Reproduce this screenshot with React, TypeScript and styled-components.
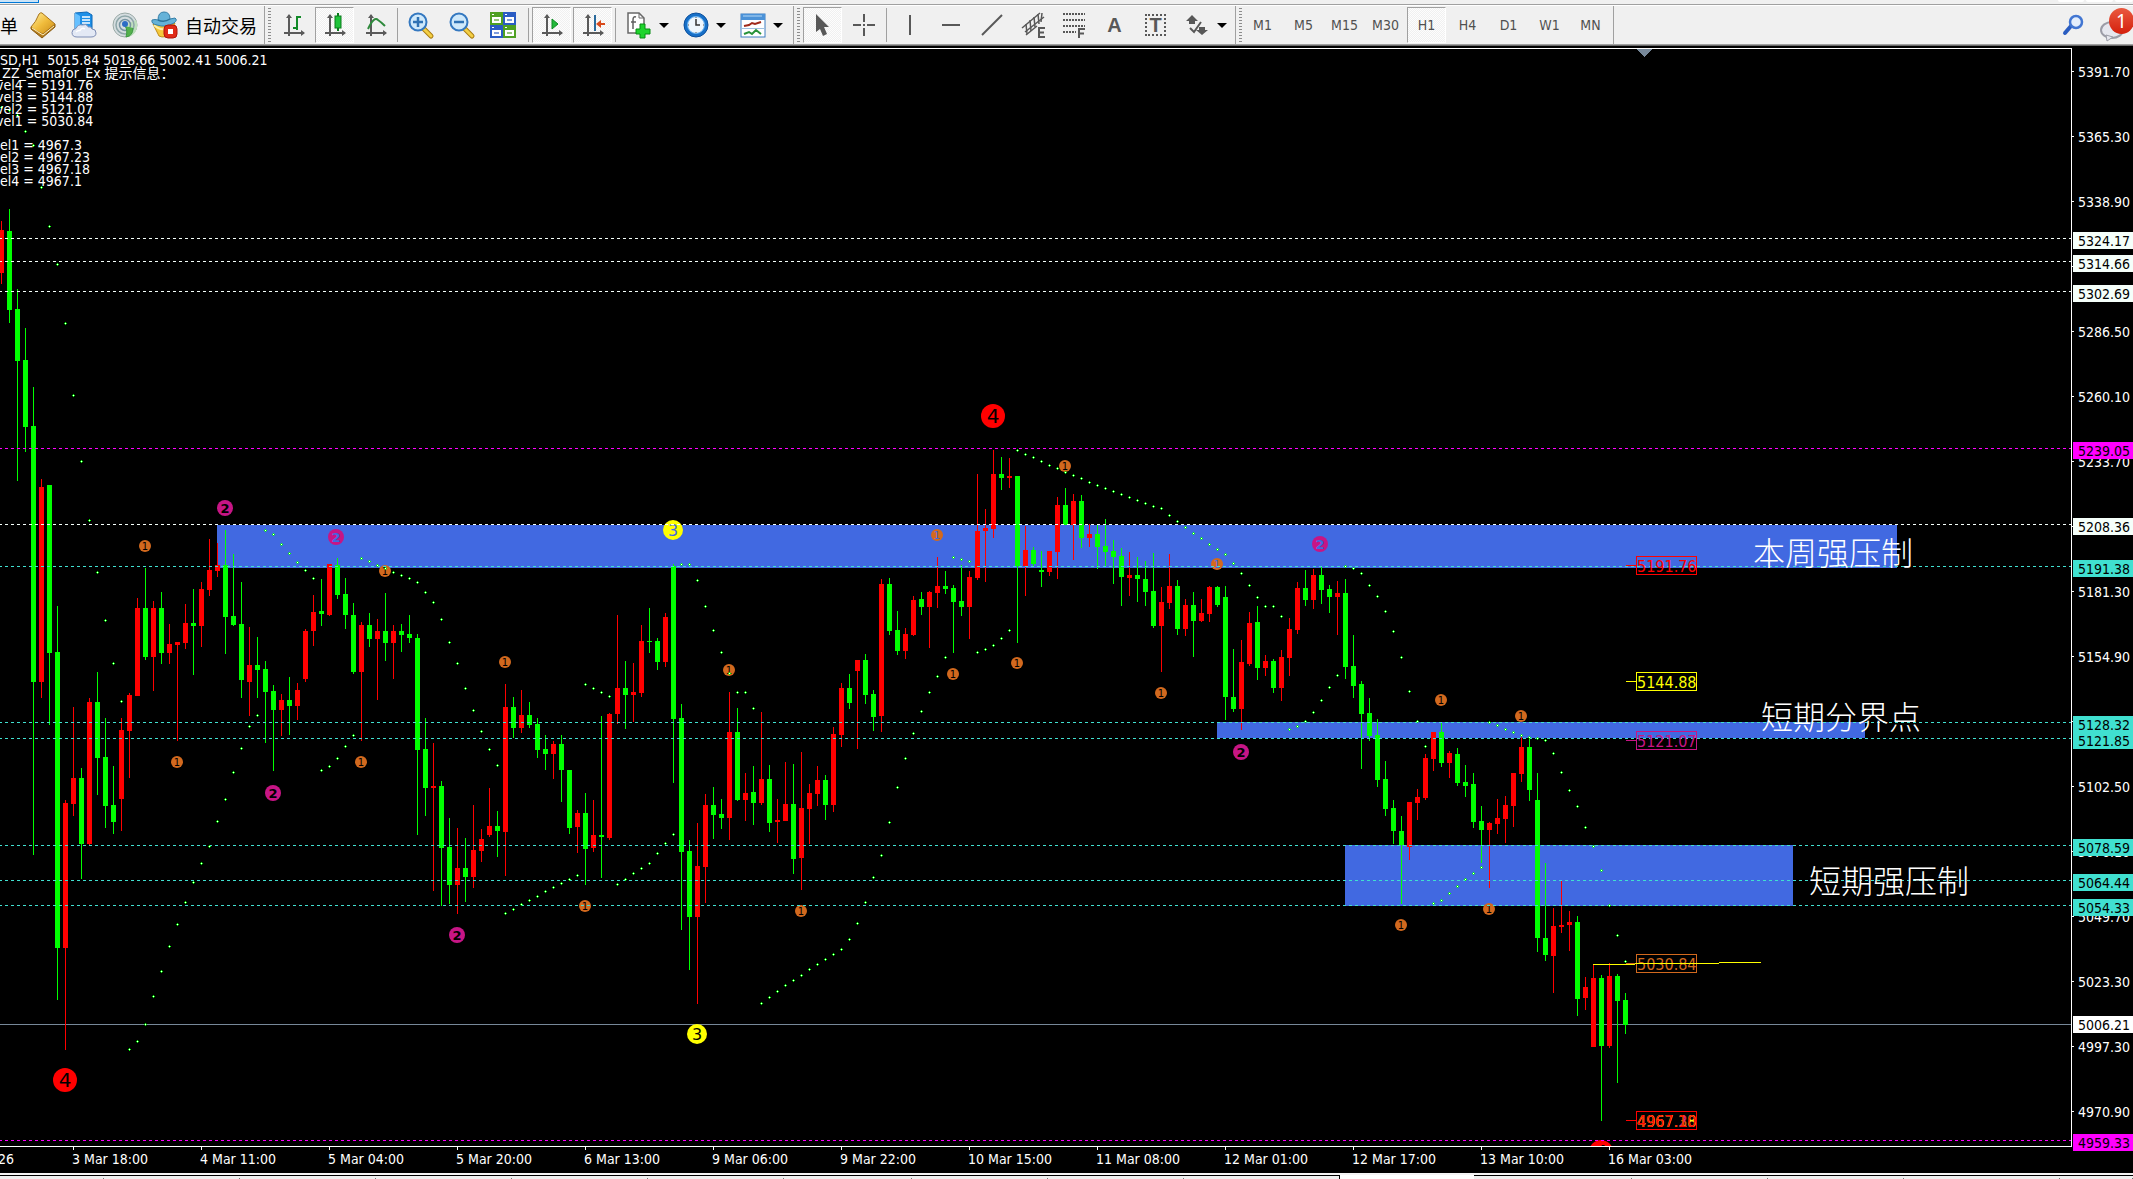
import React from 'react';
import styled, { createGlobalStyle, css } from 'styled-components';

const UI_FONT = '"DejaVu Sans Condensed", "Noto Sans", "Noto Sans CJK SC", sans-serif';
const CJK_FONT = '"Noto Sans CJK SC", sans-serif';

const UP = '#ff0000';
const DOWN = '#00ff00';
const BLUE = '#4169e1';
const TURQUOISE = '#40e0d0';
const MAGENTA = '#ff00ff';
const VIOLET = '#c71585';
const ORANGE = '#d2691e';
const YELLOW = '#ffff00';
const MINT = '#f5fffa';
const SLATE = '#778899';

const GlobalStyle = createGlobalStyle`
  *, *::before, *::after { box-sizing: border-box; }
  body { margin: 0; background: #000; overflow: hidden; }
`;

/* ------------------------------------------------------------------ */
/* Frame                                                               */
/* ------------------------------------------------------------------ */

const Window = styled.div`
  display: flex;
  flex-direction: column;
  height: 100vh;
  font-family: ${UI_FONT};
  font-size: 14px;
  line-height: 16px;
  background: #000;
`;

const UpperStrip = styled.div`
  display: flex;
  flex: none;
  height: 4px;
  background: #f0f0f0;
`;

const HotButton = styled.button`
  width: 39px;
  height: 3px;
  padding: 0;
  border: 0 solid #0078d7;
  border-width: 0 1px 1px 0;
  background: #cce4f7;
`;

const StripTail = styled.div`
  display: flex;
  gap: 2px;
  margin-left: auto;
`;

const StripBox = styled.button<{ $width: number }>`
  width: ${(p) => p.$width}px;
  height: 2px;
  padding: 0;
  border: 0;
  border-radius: 0 0 2px 2px;
  background: #fff;
`;

const Toolbar = styled.div`
  display: flex;
  flex: none;
  align-items: center;
  height: 42px;
  border-top: 1px solid #a0a0a0;
  border-bottom: 1px solid #696969;
  background: #f0f0f0;
  box-shadow: inset 0 1px 0 #fff, inset 0 -1px 0 #a0a0a0;
`;

const Group = styled.div<{ $tail?: number }>`
  display: flex;
  align-items: center;
  height: 38px;
  padding-right: ${(p) => p.$tail ?? 0}px;
  border-right: 1px solid #a0a0a0;
`;

const Gripper = styled.i<{ $after?: number }>`
  width: 3px;
  height: 34px;
  margin: 0 ${(p) => p.$after ?? 2}px 0 3px;
  background: repeating-linear-gradient(#8c8c8c 0 1px, #f0f0f0 1px 3px);
`;

const Separator = styled.i<{ $before?: number }>`
  width: 1px;
  height: 34px;
  margin: 0 2px 0 ${(p) => p.$before ?? 2}px;
  background: #a0a0a0;
`;

const ToolButton = styled.button<{ $pressed?: boolean }>`
  display: flex;
  align-items: center;
  justify-content: center;
  width: 39px;
  height: 36px;
  margin: 0 1px;
  padding: 0;
  border: 1px solid transparent;
  background: transparent;
  color: #505050;
  font: 14px/16px ${UI_FONT};
  ${(p) =>
    p.$pressed &&
    css`
      border-color: #a0a0a0 #fff #fff #a0a0a0;
      background: repeating-conic-gradient(#f0f0f0 0 25%, #fdfdfd 0 50%) 0 0 / 2px 2px;
    `}
`;

const TextButton = styled.button<{ $width?: number; $inset?: number }>`
  display: flex;
  align-items: center;
  gap: 6px;
  height: 36px;
  padding: 0 0 0 ${(p) => p.$inset ?? 0}px;
  width: ${(p) => (p.$width ? `${p.$width}px` : 'auto')};
  border: 0;
  background: transparent;
  color: #000;
  font: 18px/24px ${CJK_FONT};
  white-space: nowrap;
`;

const CaretButton = styled.button`
  display: flex;
  align-items: center;
  width: 16px;
  height: 36px;
  padding: 0;
  border: 0;
  background: transparent;
  &::before {
    content: '';
    border: 5px solid transparent;
    border-top-color: #000;
    border-bottom: 0;
  }
`;

const ToolbarEnd = styled.div`
  display: flex;
  align-items: center;
  gap: 16px;
  margin-left: auto;
`;

const ChatButton = styled.button`
  position: relative;
  width: 34px;
  height: 36px;
  padding: 0;
  border: 0;
  background: transparent;
`;

const Badge = styled.span`
  position: absolute;
  top: 1px;
  right: -1px;
  width: 25px;
  height: 26px;
  border-radius: 50%;
  background: linear-gradient(#ea5a40, #d4200c);
  color: #fff;
  font: 19px/26px "Noto Sans", sans-serif;
  text-align: center;
`;

const Glyph = styled.svg`
  display: block;
  flex: none;
  overflow: visible;
`;

/* ------------------------------------------------------------------ */
/* Toolbar icons                                                       */
/* ------------------------------------------------------------------ */

const Icon = ({ size = 26, children }: { size?: number; children: React.ReactNode }) => (
  <Glyph width={size} height={size} viewBox={`0 0 ${size} ${size}`} aria-hidden="true">
    {children}
  </Glyph>
);

const Axes = ({ children }: { children?: React.ReactNode }) => (
  <Icon size={24}>
    <path d="M7 2V23M2 20H22" stroke="#5a5a5a" strokeWidth="2" fill="none" />
    <path d="M4 5L7 1L10 5zM19 17L23 20L19 23z" fill="#5a5a5a" />
    {children}
  </Icon>
);

const GoldIcon = () => (
  <Icon>
    <defs>
      <linearGradient id="gold" x1="0" y1="0" x2="1" y2="1">
        <stop offset="0" stopColor="#fff0a0" />
        <stop offset="0.5" stopColor="#f0bc3c" />
        <stop offset="1" stopColor="#c98a18" />
      </linearGradient>
    </defs>
    <path d="M1 15V17L12 26L25 15V12L12 21L2 14z" fill="#b27a1c" stroke="#8a5c10" />
    <path d="M9 2Q11 0 12 1L25 12L13 22Q5 19 1 15Q6 10 9 2z" fill="url(#gold)" stroke="#a8741a" />
    <path d="M2 16Q8 20 13 23L24 14" fill="none" stroke="#fff2c0" />
  </Icon>
);

const CloudIcon = () => (
  <Icon>
    <path d="M4 1L16 0L21 3V17H4z" fill="#1e90e8" stroke="#0d68b8" />
    <path d="M4 1L9 4V17H4z" fill="#66c0ff" />
    <path d="M11 5H19M11 8H19M11 11H19" stroke="#fff" strokeWidth="1.500" />
    <path d="M6 25Q1 25 1 20.500Q1 17 5 16.500Q7 12 11.500 13Q15 11 17.500 15Q20 14 21 17Q25 17 25 21Q25 25 20 25z" fill="#e3e9f5" stroke="#7d8db4" />
    <path d="M5 20Q7 18 9 18.500Q11 15 14 17" fill="none" stroke="#fff" strokeWidth="1.500" />
  </Icon>
);

const SignalIcon = () => (
  <Icon>
    <circle cx="13" cy="13" r="12" fill="#d5dde0" stroke="#9aa9a6" />
    <path d="M13 13L16 25A12 12 0 0 0 24 8z" fill="#bfe0be" />
    <circle cx="13" cy="13" r="9" fill="none" stroke="#8fa7a9" strokeWidth="1.500" />
    <circle cx="13" cy="13" r="5.500" fill="none" stroke="#7794a0" strokeWidth="1.500" />
    <path d="M13 14Q16 18 14 25Q21 24 21 16" fill="#54b04c" stroke="#3c9840" />
    <circle cx="13" cy="12" r="3" fill="#2c6cc4" />
  </Icon>
);

const AutoTradeIcon = () => (
  <Icon size={28}>
    <path d="M2 13L8 25Q14 28 19 22L24 12z" fill="#f5c93c" stroke="#c08c18" />
    <path d="M3 14Q8 19 14 18" fill="none" stroke="#fff0a8" strokeWidth="2" />
    <path d="M1 9Q0 13 6 14Q14 17 23 12Q27 9 24 7L19 8Q19 1 13 1Q7 1 7 9Q4 8 1 9z" fill="#65b2d8" stroke="#357fa8" />
    <path d="M7 9Q13 12 19 8" fill="none" stroke="#2d7298" strokeWidth="1.500" />
    <rect x="13" y="14" width="13" height="13" rx="4" fill="#e02b18" stroke="#b01408" />
    <rect x="17" y="18" width="5" height="5" fill="#fff" />
  </Icon>
);

const Magnifier = ({ plus }: { plus?: boolean }) => (
  <Icon>
    <path d="M16 17L23 24" stroke="#a87a10" strokeWidth="5" strokeLinecap="round" />
    <path d="M16 17L23 24" stroke="#f3cf45" strokeWidth="3" strokeLinecap="round" />
    <circle cx="10" cy="10" r="8.500" fill="#cfe9fb" stroke="#3478c0" strokeWidth="2" />
    <path d={plus ? 'M5 10H15M10 5V15' : 'M5 10H15'} stroke="#2f72b4" strokeWidth="2.500" />
  </Icon>
);

const TilesIcon = () => (
  <Icon>
    {[
      { x: 0, y: 0, c: '#4ea022' },
      { x: 13, y: 0, c: '#2a5cc4' },
      { x: 0, y: 13, c: '#2a5cc4' },
      { x: 13, y: 13, c: '#4ea022' },
    ].map(({ x, y, c }) => (
      <g key={`${x}-${y}`}>
        <rect x={x} y={y} width="13" height="13" fill={c} />
        <rect x={x + 2} y={y + 5} width="9" height="6" fill="#fff" />
        <rect x={x + 4} y={y + 7} width="5" height="2" fill={c} opacity="0.6" />
        <rect x={x + 2} y={y + 2} width="2" height="1" fill="#fff" />
      </g>
    ))}
  </Icon>
);

const AddIndicatorIcon = () => (
  <Icon size={28}>
    <path d="M3 2H14L19 7V22H3z" fill="#fff" stroke="#686868" strokeWidth="1.500" />
    <path d="M14 2V7H19" fill="none" stroke="#686868" />
    <path d="M11 6Q8 5 8 9V18M6 11H11" fill="none" stroke="#606060" strokeWidth="1.500" />
    <path d="M15 13H20V18H25V23H20V27H15V23H11V18H15z" fill="#1ed42c" stroke="#078c12" />
  </Icon>
);

const ClockIcon = () => (
  <Icon>
    <circle cx="13" cy="13" r="12" fill="#1770c8" stroke="#0c4f9c" />
    <circle cx="13" cy="13" r="8.500" fill="#eef6fd" stroke="#65b0f0" />
    <path d="M13 7V13H17" fill="none" stroke="#333" strokeWidth="1.500" />
    <path d="M13 5V6M13 20V21M5 13H6M20 13H21" stroke="#555" />
  </Icon>
);

const TemplateIcon = () => (
  <Icon>
    <rect x="1" y="2" width="24" height="23" fill="#fff" stroke="#3d7cc0" />
    <rect x="1" y="2" width="24" height="6" fill="#4b92d8" />
    <path d="M3 4H22" stroke="#b4d8f6" />
    <path d="M4 14L9 13L12 11L15 12L21 10" fill="none" stroke="#a02a1a" strokeWidth="2" />
    <path d="M2 16.500H24" stroke="#9fc0e0" />
    <path d="M4 22L9 20L12 22L16 18L21 22" fill="none" stroke="#28923a" strokeWidth="2" />
  </Icon>
);

const GREY = '#585858';

const CursorIcon = () => (
  <Icon size={24}>
    <path d="M5 1V19L9 16L12 23L16 21L13 14H18z" fill={GREY} />
  </Icon>
);

const CrossIcon = () => (
  <Icon size={24}>
    <path d="M12 1V9M12 15V23M1 12H9M15 12H23" stroke={GREY} strokeWidth="2" />
    <path d="M11 12H13" stroke={GREY} strokeWidth="2" />
  </Icon>
);

const VLineIcon = () => (
  <Icon size={24}>
    <path d="M12 2V22" stroke={GREY} strokeWidth="2" />
  </Icon>
);

const HLineIcon = () => (
  <Icon size={24}>
    <path d="M3 12H21" stroke={GREY} strokeWidth="2" />
  </Icon>
);

const TrendIcon = () => (
  <Icon size={24}>
    <path d="M2 22L22 2" stroke={GREY} strokeWidth="2" />
  </Icon>
);

const ChannelIcon = () => (
  <Icon size={26}>
    <path d="M2 16L20 1M5 20L24 5M6 23L17 14" stroke={GREY} strokeWidth="1.500" />
    <path d="M6 12L7 22M10 8L11 19M14 5L15 15M18 2L19 12M22 1L21 10" stroke={GREY} strokeWidth="1.500" />
    <path d="M25 16H19V25H25M19 20.500H24" fill="none" stroke={GREY} strokeWidth="2" />
  </Icon>
);

const FiboIcon = () => (
  <Icon size={26}>
    <path d="M2 2H24M2 8H24M2 14H24M2 20H15" stroke={GREY} strokeWidth="2" strokeDasharray="2 1" />
    <path d="M24 17H18V26M18 21.500H23" fill="none" stroke={GREY} strokeWidth="2" />
  </Icon>
);

const Letter = styled.span<{ $boxed?: boolean }>`
  color: ${GREY};
  font: bold 20px/20px "Liberation Sans", sans-serif;
  ${(p) =>
    p.$boxed &&
    css`
      width: 21px;
      height: 22px;
      border: 2px dotted ${GREY};
      line-height: 18px;
    `}
`;

const ArrowsIcon = () => (
  <Icon size={24}>
    <path d="M7 2L13 8H10V11H4V8H1z" fill={GREY} />
    <path d="M17 22L11 17H14V14H20V17H23z" fill={GREY} />
    <path d="M5 15L9 19L16 9" fill="none" stroke={GREY} strokeWidth="2" />
  </Icon>
);

const SearchIcon = () => (
  <Icon size={22}>
    <path d="M10 12L4 19" stroke="#2a5cc0" strokeWidth="4" strokeLinecap="round" />
    <circle cx="15" cy="8" r="6" fill="#e4eefc" stroke="#4276d2" strokeWidth="2.500" />
  </Icon>
);

const ChatIcon = () => (
  <Icon size={36}>
    <ellipse cx="13" cy="23" rx="11" ry="8" fill="#e6e7ee" stroke="#9b9ca6" strokeWidth="2" />
    <path d="M7 28L8 34L14 30z" fill="#e6e7ee" stroke="#9b9ca6" />
  </Icon>
);

/* ------------------------------------------------------------------ */
/* Chart data                                                          */
/* ------------------------------------------------------------------ */

// One candle per entry: colour, high, body top, body bottom, low.
const CANDLES = `
r 221 230 273 284|g 209 231 310 323|g 289 309 361 481|g 328 360 427 452|g 387 426 682 855|r 479 487 682 698
g 485 485 653 725|g 606 652 948 1000|r 800 803 948 1050|r 707 778 804 816|g 768 778 844 879|r 698 702 844 845
g 672 702 758 795|g 718 757 806 828|g 766 805 822 834|r 718 730 799 831|r 693 695 731 778|r 598 608 696 696
g 568 608 657 660|r 601 608 657 691|g 592 608 653 664|r 624 644 653 664|r 642 642 645 741|r 604 623 643 649
g 589 623 626 675|r 582 589 626 647|r 539 570 590 596|r 543 565 571 577|g 530 565 617 654|g 554 616 625 626
g 582 624 680 698|r 627 665 682 716|g 637 665 670 698|g 661 669 692 743|g 685 691 710 771|r 694 700 710 736
g 677 700 706 735|r 683 690 706 720|r 629 631 679 682|r 595 612 631 646|g 579 611 614 626|r 564 564 615 616
g 558 565 595 599|g 578 594 615 629|g 603 615 672 674|r 622 625 672 741|g 613 625 639 647|r 619 631 639 700
g 593 631 643 661|r 625 631 643 679|g 624 631 635 652|g 615 634 638 643|g 634 638 750 835|g 718 749 788 816
r 743 786 788 891|g 781 786 848 906|g 818 847 885 904|r 828 868 885 914|g 838 868 877 902|r 805 850 877 888
r 829 839 851 862|r 788 826 835 837|g 811 826 831 857|r 684 707 832 876|g 697 707 728 738|r 690 715 728 733
g 702 715 725 728|g 718 724 750 758|g 735 749 754 770|r 741 744 754 779|g 735 744 770 802|g 770 770 828 834
r 810 813 827 853|g 793 813 849 885|r 800 835 848 852|g 716 835 837 878|r 713 714 838 840|r 615 688 714 724
g 661 688 695 729|r 663 692 695 722|r 625 641 693 697|g 608 641 642 653|g 638 641 662 670|r 613 617 662 667
g 564 566 719 783|g 704 718 852 930|g 840 851 917 970|r 823 866 917 1004|r 794 805 867 903|g 787 805 815 839
g 799 814 818 829|r 692 732 818 840|g 708 732 800 801|r 773 793 800 821|g 766 792 803 825|r 712 779 803 805
g 765 779 823 832|r 799 820 822 843|r 762 804 821 821|g 764 804 859 874|r 752 808 858 890|r 784 793 809 844
r 766 780 794 806|g 775 780 805 820|r 727 734 805 812|r 683 688 735 747|g 674 688 703 709|r 660 660 671 749
g 654 660 695 704|g 690 694 717 731|r 579 584 716 732|g 578 584 631 635|g 611 630 651 655|r 628 634 651 659
r 596 600 635 636|g 592 599 607 615|r 591 592 607 648|r 557 586 593 608|g 571 586 589 594|g 585 588 602 653
g 565 601 607 616|r 571 577 607 639|r 474 531 578 580|r 509 528 531 582|r 450 474 529 538|g 457 474 478 490
r 458 476 478 488|g 476 476 566 643|r 526 550 566 596|g 547 550 564 566|g 551 570 572 587|r 551 551 572 576
r 497 505 552 579|g 488 505 525 525|r 494 501 525 560|g 495 501 538 548|r 524 534 538 547|g 525 534 547 569
g 519 546 552 567|g 540 551 557 584|g 548 556 577 606|r 552 575 578 596|g 557 575 579 602|g 561 579 592 606
g 553 591 626 628|r 587 602 626 672|r 554 586 603 609|g 580 586 629 635|r 599 605 629 636|g 592 605 621 657
r 599 613 621 622|r 586 587 614 622|g 586 587 605 607|g 586 597 697 720|g 649 697 709 712|r 640 662 709 730
r 612 623 664 666|g 606 622 668 680|r 655 661 668 676|g 659 661 688 693|r 650 657 688 701|r 618 629 658 676
r 582 588 630 634|g 570 588 600 606|r 569 575 600 609|g 567 575 590 604|g 585 589 597 613|r 581 593 597 635
g 579 593 667 679|g 635 666 686 698|g 681 684 714 769|g 698 713 736 741|g 719 735 780 787|g 761 779 809 816
g 800 808 831 844|g 816 831 845 904|r 802 802 847 860|r 789 797 803 820|r 754 758 798 800|r 732 732 759 771
g 723 732 763 767|r 751 753 763 778|g 748 754 783 786|g 765 782 786 797|g 773 784 822 828|g 806 821 830 863
r 822 823 830 888|r 799 818 824 834|r 796 805 819 843|r 773 773 806 827|r 737 747 774 782|g 737 747 790 801
g 773 800 938 952|g 863 938 955 961|r 908 926 956 993|r 881 925 927 933|r 911 922 925 951|g 916 922 999 1016
r 977 987 998 1010|r 964 978 1047 1047|g 975 978 1046 1121|r 963 976 1046 1048|g 974 976 1001 1083|g 993 1000 1025 1034
`
  .trim()
  .split(/[|\n]/)
  .map((entry) => {
    const [tone, ...levels] = entry.split(' ');
    const [high, top, bottom, low] = levels.map(Number);
    return { tone, high, top, bottom, low };
  });

// Parabolic SAR level for every candle.
const SAR = [
  107, 110, 115, 131, 145, 187, 226, 264, 323, 395, 461, 520, 572, 620, 663, 701, 1049, 1041, 1024, 996,
  971, 946, 924, 902, 882, 863, 846, 821, 799, 772, 748, 726, 715, 530, 534, 544, 553, 562, 570, 578,
  770, 766, 758, 746, 735, 558, 561, 565, 568, 572, 575, 578, 582, 592, 602, 619, 642, 663, 688, 710,
  731, 749, 765, 913, 909, 904, 900, 896, 891, 887, 883, 879, 875, 684, 688, 692, 696, 884, 879, 873,
  868, 863, 853, 843, 834, 564, 564, 580, 606, 630, 652, 673, 692, 692, 708, 1003, 997, 991, 985, 980,
  975, 969, 964, 959, 954, 949, 939, 923, 902, 877, 855, 822, 787, 758, 733, 711, 692, 676, 657, 557,
  559, 561, 652, 649, 645, 638, 630, 450, 454, 457, 461, 465, 468, 472, 475, 478, 482, 485, 488, 491,
  494, 497, 500, 503, 506, 508, 515, 521, 527, 533, 538, 544, 549, 554, 563, 573, 585, 597, 606, 606,
  616, 729, 726, 721, 712, 700, 687, 675, 566, 568, 573, 585, 596, 611, 631, 657, 691, 721, 746, 903,
  900, 893, 886, 879, 873, 867, 722, 725, 729, 732, 735, 737, 738, 740, 753, 772, 790, 806, 827, 846,
  870, 905, 935, 961,
];

const LEVELS = [
  { y: 238, color: MINT, price: '5324.17' },
  { y: 261, color: MINT, price: '5314.66' },
  { y: 291, color: MINT, price: '5302.69' },
  { y: 448, color: MAGENTA, price: '5239.05' },
  { y: 524, color: MINT, price: '5208.36' },
  { y: 566, color: TURQUOISE, price: '5191.38' },
  { y: 722, color: TURQUOISE, price: '5128.32' },
  { y: 738, color: TURQUOISE, price: '5121.85' },
  { y: 845, color: TURQUOISE, price: '5078.59' },
  { y: 880, color: TURQUOISE, price: '5064.44' },
  { y: 905, color: TURQUOISE, price: '5054.33' },
  { y: 1140, color: MAGENTA, price: '4959.33' },
];

const ZONES = [
  { x: 217, y: 525, w: 1680, h: 43 },
  { x: 1217, y: 722, w: 648, h: 16 },
  { x: 1345, y: 845, w: 448, h: 61 },
];

const NOTES = [
  { x: 1753, y: 565, text: '本周强压制' },
  { x: 1761, y: 729, text: '短期分界点' },
  { x: 1809, y: 893, text: '短期强压制' },
];

const PRICE_TAGS = [
  { y: 556, color: UP, texts: [['5191.76', UP]] },
  { y: 672, color: YELLOW, texts: [['5144.88', YELLOW]] },
  { y: 731, color: VIOLET, texts: [['5121.07', VIOLET]] },
  { y: 954, color: ORANGE, texts: [['5030.84', ORANGE]] },
  {
    y: 1111,
    color: UP,
    texts: [
      ['4967.30', ORANGE],
      ['4967.23', VIOLET],
      ['4967.18', YELLOW],
      ['4967.10', UP],
    ],
  },
];

const RANKS = {
  1: { r: 6, fill: ORANGE, size: 10, dy: 4, weight: 'normal' },
  2: { r: 8, fill: VIOLET, size: 13, dy: 5, weight: 'bold' },
  3: { r: 10, fill: YELLOW, size: 16, dy: 6, weight: 'normal' },
  4: { r: 12, fill: UP, size: 20, dy: 7, weight: 'normal' },
} as const;

// Swing points: rank, x, y.
const SWINGS: [keyof typeof RANKS, number, number][] = [
  [1, 145, 546], [1, 177, 762], [1, 361, 762], [1, 385, 571], [1, 505, 662], [1, 585, 906],
  [1, 729, 670], [1, 801, 911], [1, 937, 535], [1, 953, 674], [1, 1017, 663], [1, 1065, 466],
  [1, 1161, 693], [1, 1217, 564], [1, 1401, 925], [1, 1441, 700], [1, 1489, 909], [1, 1521, 716],
  [2, 225, 508], [2, 336, 537], [2, 273, 793], [2, 457, 935], [2, 1241, 752], [2, 1320, 544],
  [3, 673, 530], [3, 697, 1034],
  [4, 65, 1080], [4, 993, 416], [4, 1601, 1152],
];

const GRID_PRICES = [
  '5391.70', '5365.30', '5338.90', '5312.50', '5286.50', '5260.10', '5233.70', '5207.30', '5181.30',
  '5154.90', '5128.50', '5102.50', '5076.10', '5049.70', '5023.30', '4997.30', '4970.90',
];

const TIMES = [
  '3 Mar 18:00', '4 Mar 11:00', '5 Mar 04:00', '5 Mar 20:00', '6 Mar 13:00', '9 Mar 06:00', '9 Mar 22:00',
  '10 Mar 15:00', '11 Mar 08:00', '12 Mar 01:00', '12 Mar 17:00', '13 Mar 10:00', '16 Mar 03:00',
];

const LAST_PRICE_Y = 1024;
const PLOT_TOP = 49;
const STEP = 8;
const candleX = (i: number) => 1 + i * STEP;

const inZone = (x: number, y: number) =>
  ZONES.some((z) => x >= z.x && x <= z.x + z.w && y >= z.y && y <= z.y + z.h);

/* ------------------------------------------------------------------ */
/* Chart                                                               */
/* ------------------------------------------------------------------ */

const ChartArea = styled.main`
  display: grid;
  flex: 1;
  grid-template-columns: minmax(0, 1fr) 61px;
  grid-template-rows: minmax(0, 1fr) 26px;
  min-height: 0;
  padding-top: 2px;
  background: #000;
  color: #fff;
`;

const Plot = styled.section`
  position: relative;
  display: grid;
  overflow: hidden;
  border: 0 solid #fff;
  border-width: 1px 1px 1px 0;
`;

const Canvas = styled.svg`
  display: block;
  width: 100%;
  height: 100%;
  min-height: 0;
`;

const NoteText = styled.text`
  fill: #fff;
  font-family: ${CJK_FONT};
  font-size: 32px;
  font-weight: 300;
`;

const TagText = styled.text`
  font-family: ${UI_FONT};
  font-size: 16px;
`;

const Comment = styled.div`
  position: absolute;
  top: 4px;
  left: 0;
  line-height: 12px;
  white-space: pre;
`;

const Quote = styled.div`
  line-height: 14px;
`;

const Shifted = styled.div`
  margin-left: -4px;
`;

const LowerLevels = styled.div`
  padding-top: 12px;
`;

const PriceAxis = styled.aside`
  position: relative;
  grid-row: 1 / -1;
  grid-column: 2;
`;

const PriceList = styled.ol`
  margin: -9px 0 0;
  padding: 0;
  list-style: none;
`;

const PriceItem = styled.li`
  display: flex;
  align-items: center;
  gap: 4px;
  height: 65px;
  &::before {
    content: '';
    width: 2px;
    height: 1px;
    background: #fff;
  }
`;

const PriceFlag = styled.div<{ $top: number; $color: string }>`
  position: absolute;
  top: ${(p) => p.$top}px;
  left: 1px;
  right: 0;
  height: 17px;
  padding-left: 5px;
  background: ${(p) => p.$color};
  color: #000;
  line-height: 18px;
`;

const TimeAxis = styled.ol`
  display: flex;
  margin: 0;
  padding: 0;
  overflow: hidden;
  list-style: none;
  white-space: nowrap;
`;

const TimeItem = styled.li`
  flex: none;
  width: 128px;
  line-height: 18px;
  &::before {
    content: '';
    display: block;
    width: 1px;
    height: 3px;
    margin-left: 1px;
    background: #fff;
  }
`;

const FirstTime = styled.li`
  flex: none;
  width: 72px;
  padding-top: 3px;
  line-height: 18px;
  text-indent: -2px;
`;

const TabStrip = styled.nav`
  display: flex;
  flex: none;
  height: 6px;
  border-top: 2px solid #f4f4f4;
  background: #f0f0f0;
`;

const Tab = styled.button<{ $active?: boolean; $grow?: boolean; $width?: number }>`
  flex: ${(p) => (p.$grow ? '1' : 'none')};
  width: ${(p) => p.$width ?? 136}px;
  height: 4px;
  padding: 0;
  border: 0;
  border-top: 1px solid ${(p) => (p.$active ? '#fff' : '#000')};
  background: ${(p) =>
    p.$active ? '#fff' : 'linear-gradient(#777, #777) 100% 100% / 1px 1px no-repeat #f0f0f0'};
  box-shadow: ${(p) => (p.$active ? '-1px 0 0 #000, 1px 0 0 #000' : 'none')};
`;

const PriceChart = () => {
  const greenDots = SAR.map((y, i) => {
    const x = candleX(i);
    return `M${x - 1} ${y}h3v1h-3zM${x} ${y - 1}h1v3h-1z`;
  }).join('');
  const dotCores = SAR.map((y, i) => `M${candleX(i)} ${y}h1v1h-1z`).join('');

  return (
    <Canvas role="img" aria-label="H1 candlestick chart">
      <g transform={`translate(0 ${-PLOT_TOP})`}>
        <g shapeRendering="crispEdges">
          {ZONES.map((z) => (
            <rect key={z.y} x={z.x} y={z.y} width={z.w} height={z.h} fill={BLUE} />
          ))}
          <rect x="0" y={LAST_PRICE_Y} width="100%" height="1" fill={SLATE} />
          {CANDLES.map((c, i) => {
            const x = candleX(i);
            const fill = c.tone === 'r' ? UP : DOWN;
            return (
              <g key={i} fill={fill}>
                <rect x={x} y={c.high} width="1" height={c.low - c.high} />
                <rect x={x - 2} y={c.top} width="5" height={Math.max(1, c.bottom - c.top)} />
              </g>
            );
          })}
        </g>

        {SWINGS.map(([rank, x, y]) => {
          const s = RANKS[rank];
          return (
            <g key={`${x}-${y}`}>
              <circle cx={x} cy={y} r={s.r} fill={s.fill} />
              <text
                x={x}
                y={y + s.dy}
                fill={inZone(x, y) ? BLUE : '#000'}
                fontFamily='"DejaVu Sans", sans-serif'
                fontSize={s.size}
                fontWeight={s.weight}
                textAnchor="middle"
              >
                {rank}
              </text>
            </g>
          );
        })}

        <g shapeRendering="crispEdges">
          {LEVELS.map((l) => (
            <line
              key={l.y}
              x1="0"
              x2="100%"
              y1={l.y + 0.5}
              y2={l.y + 0.5}
              stroke={l.color}
              strokeDasharray="3 3"
              strokeDashoffset="1"
            />
          ))}
          <path d={greenDots} fill="#00ff00" />
          <path d={dotCores} fill="#fff" />
          <path d="M1636 49H1652L1644 57z" fill={SLATE} />
          {PRICE_TAGS.map((t) => (
            <g key={t.y}>
              <rect x="1626" y={t.y + 9} width="10" height="1" fill={t.color} />
              <rect x="1636.5" y={t.y + 0.5} width="60" height="18" fill="none" stroke={t.color} />
            </g>
          ))}
        </g>

        {PRICE_TAGS.map((t) =>
          t.texts.map(([text, color]) => (
            <TagText key={text} x="1637" y={t.y + 16} fill={color}>
              {text}
            </TagText>
          )),
        )}
        <path
          d="M1593 964h42v1h-42zM1635 963h84v1h-84zM1719 962h42v1h-42z"
          fill={YELLOW}
          shapeRendering="crispEdges"
        />
        {NOTES.map((n) => (
          <NoteText key={n.y} x={n.x} y={n.y}>
            {n.text}
          </NoteText>
        ))}
      </g>
    </Canvas>
  );
};

/* ------------------------------------------------------------------ */
/* App                                                                 */
/* ------------------------------------------------------------------ */

type Tool = { label: string; icon: React.ReactNode; pressed?: boolean };

const Tools = ({ items }: { items: Tool[] }) => (
  <>
    {items.map((t) => (
      <ToolButton key={t.label} type="button" aria-label={t.label} aria-pressed={!!t.pressed} $pressed={t.pressed}>
        {t.icon}
      </ToolButton>
    ))}
  </>
);

const PERIODS = ['M1', 'M5', 'M15', 'M30', 'H1', 'H4', 'D1', 'W1', 'MN'];
const LEFT_TABS = [104, 136, 136, 136, 136, 136, 128, 136, 136];
const RIGHT_TABS = [158, 136, 136, 156];

export default function App() {
  return (
    <Window>
      <GlobalStyle />
      <UpperStrip>
        <HotButton type="button" aria-label="Menu" />
        <StripTail>
          <StripBox type="button" aria-label="Minimize" $width={26} />
          <StripBox type="button" aria-label="Restore" $width={27} />
          <StripBox type="button" aria-label="Close" $width={18} />
        </StripTail>
      </UpperStrip>

      <Toolbar role="toolbar">
        <Group $tail={6}>
          <TextButton type="button" $width={22}>单</TextButton>
          <Tools
            items={[
              { label: 'Market', icon: <GoldIcon /> },
              { label: 'Hosting', icon: <CloudIcon /> },
              { label: 'Signals', icon: <SignalIcon /> },
            ]}
          />
          <TextButton type="button" $width={113} $inset={6}>
            <AutoTradeIcon />
            自动交易
          </TextButton>
        </Group>

        <Group $tail={4}>
          <Gripper />
          <Tools
            items={[
              {
                label: 'Bar chart',
                icon: (
                  <Axes>
                    <path d="M15 3V17M15 4H19M11 15H15" stroke="#128a28" strokeWidth="2" />
                  </Axes>
                ),
              },
              {
                label: 'Candlesticks',
                pressed: true,
                icon: (
                  <Axes>
                    <path d="M15 0V18" stroke="#0a7a1c" strokeWidth="2" />
                    <rect x="12" y="3" width="6" height="12" fill="#1fc43a" stroke="#0a7a1c" />
                  </Axes>
                ),
              },
              {
                label: 'Line chart',
                icon: (
                  <Axes>
                    <path d="M4 16Q10 3 14 7Q17 9 21 13" fill="none" stroke="#2e8a3c" strokeWidth="2" />
                  </Axes>
                ),
              },
            ]}
          />
          <Separator $before={1} />
          <Tools
            items={[
              { label: 'Zoom in', icon: <Magnifier plus /> },
              { label: 'Zoom out', icon: <Magnifier /> },
              { label: 'Tile windows', icon: <TilesIcon /> },
            ]}
          />
          <Separator $before={5} />
          <Tools
            items={[
              {
                label: 'Auto scroll',
                pressed: true,
                icon: (
                  <Axes>
                    <path d="M12 6L18 11L12 16z" fill="#22b83a" stroke="#0f8a22" />
                  </Axes>
                ),
              },
              {
                label: 'Chart shift',
                pressed: true,
                icon: (
                  <Axes>
                    <path d="M14 2V18" stroke="#2a6a9c" strokeWidth="2" />
                    <path d="M15 11L20 7V10H24V12H20V15z" fill="#d8491a" />
                  </Axes>
                ),
              },
            ]}
          />
          <Separator />
          <Tools items={[{ label: 'Indicators', icon: <AddIndicatorIcon /> }]} />
          <CaretButton type="button" aria-label="Indicator list" />
          <Tools items={[{ label: 'Periods', icon: <ClockIcon /> }]} />
          <CaretButton type="button" aria-label="Period list" />
          <Tools items={[{ label: 'Templates', icon: <TemplateIcon /> }]} />
          <CaretButton type="button" aria-label="Template list" />
        </Group>

        <Group $tail={2}>
          <Gripper />
          <Tools
            items={[
              { label: 'Cursor', icon: <CursorIcon />, pressed: true },
              { label: 'Crosshair', icon: <CrossIcon /> },
            ]}
          />
          <Separator />
          <Tools
            items={[
              { label: 'Vertical line', icon: <VLineIcon /> },
              { label: 'Horizontal line', icon: <HLineIcon /> },
              { label: 'Trendline', icon: <TrendIcon /> },
              { label: 'Equidistant channel', icon: <ChannelIcon /> },
              { label: 'Fibonacci retracement', icon: <FiboIcon /> },
              { label: 'Text', icon: <Letter>A</Letter> },
              { label: 'Text label', icon: <Letter $boxed>T</Letter> },
              { label: 'Arrows', icon: <ArrowsIcon /> },
            ]}
          />
          <CaretButton type="button" aria-label="Arrow list" />
        </Group>

        <Group $tail={2}>
          <Gripper $after={0} />
          {PERIODS.map((p) => (
            <ToolButton key={p} type="button" $pressed={p === 'H1'} aria-pressed={p === 'H1'}>
              {p}
            </ToolButton>
          ))}
        </Group>

        <ToolbarEnd>
          <TextButton type="button" aria-label="Search">
            <SearchIcon />
          </TextButton>
          <ChatButton type="button" aria-label="Messages">
            <ChatIcon />
            <Badge>1</Badge>
          </ChatButton>
        </ToolbarEnd>
      </Toolbar>

      <ChartArea>
        <Plot>
          <PriceChart />
          <Comment>
            <Quote>SD,H1  5015.84 5018.66 5002.41 5006.21</Quote>
            <Shifted>_ZZ_Semafor_Ex 提示信息：</Shifted>
            <Shifted>
              {['4 = 5191.76', '3 = 5144.88', '2 = 5121.07', '1 = 5030.84'].map((t) => (
                <div key={t}>vel{t}</div>
              ))}
            </Shifted>
            <LowerLevels>
              {['1 = 4967.3', '2 = 4967.23', '3 = 4967.18', '4 = 4967.1'].map((t) => (
                <div key={t}>el{t}</div>
              ))}
            </LowerLevels>
          </Comment>
        </Plot>

        <PriceAxis>
          <PriceList>
            {GRID_PRICES.map((p) => (
              <PriceItem key={p}>{p}</PriceItem>
            ))}
          </PriceList>
          {LEVELS.map((l) => (
            <PriceFlag key={l.y} $top={l.y - 6 - PLOT_TOP + 1} $color={l.color}>
              {l.price}
            </PriceFlag>
          ))}
          <PriceFlag $top={LAST_PRICE_Y - 8 - PLOT_TOP + 1} $color="#fff">
            5006.21
          </PriceFlag>
        </PriceAxis>

        <TimeAxis>
          <FirstTime>26</FirstTime>
          {TIMES.map((t) => (
            <TimeItem key={t}>{t}</TimeItem>
          ))}
        </TimeAxis>
      </ChartArea>

      <TabStrip>
        {LEFT_TABS.map((w, i) => (
          <Tab key={i} type="button" aria-label={`Chart ${i + 1}`} $width={w} />
        ))}
        <Tab type="button" aria-label="Chart 10" $grow />
        <Tab type="button" aria-label="Chart 11" $active $width={134} />
        {RIGHT_TABS.map((w, i) => (
          <Tab key={i} type="button" aria-label={`Chart ${i + 12}`} $width={w} />
        ))}
        <Tab type="button" aria-label="Chart 16" $width={73} />
      </TabStrip>
    </Window>
  );
}
